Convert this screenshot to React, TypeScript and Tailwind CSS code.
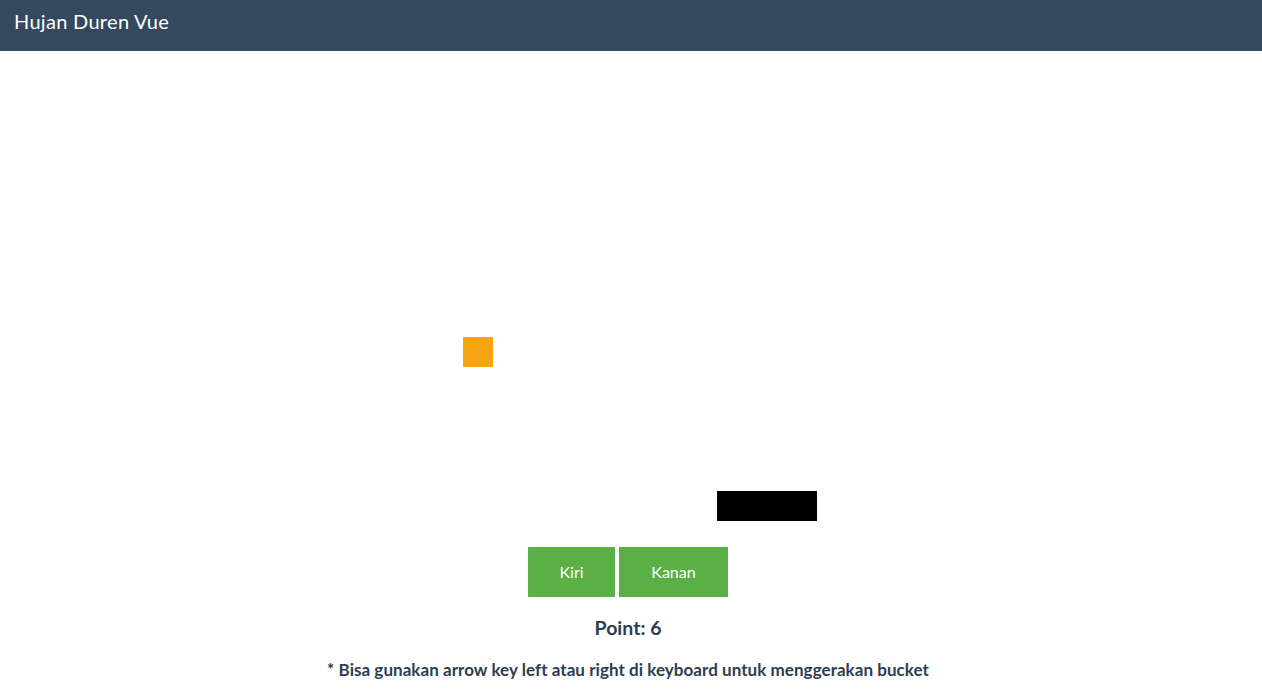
import React from "react";

export default function App() {
  return (
    <div className="min-h-[692px] bg-white text-[#2c3e50]" style={{ fontFamily: "Lato, 'Noto Sans', sans-serif" }}>
      <header className="h-[51px] bg-[#35495e] flex items-center px-[14px]">
        <h1 className="text-white text-[20px] leading-none tracking-[0.3px] -mt-[10px]">Hujan Duren Vue</h1>
      </header>
      <div className="relative h-[470px] w-full">
        <div className="absolute left-[463px] top-[286px] w-[30px] h-[30px] bg-[#f9a512]" />
        <div className="absolute left-[717px] top-[440px] w-[100px] h-[30px] bg-black" />
      </div>
      <div className="flex justify-center gap-[4px] mt-[26px] pr-[6px]">
        <button className="w-[87px] h-[50px] bg-[#5aaf45] text-white text-[16px]">Kiri</button>
        <button className="w-[109px] h-[50px] bg-[#5aaf45] text-white text-[16px]">Kanan</button>
      </div>
      <p className="text-center font-bold text-[19.5px] mt-[19px] leading-[24px] pr-[6px]">Point: 6</p>
      <p className="text-center font-bold text-[17px] mt-[19px] leading-[22px] pr-[6px] tracking-[0.05px]">* Bisa gunakan arrow key left atau right di keyboard untuk menggerakan bucket</p>
    </div>
  );
}
